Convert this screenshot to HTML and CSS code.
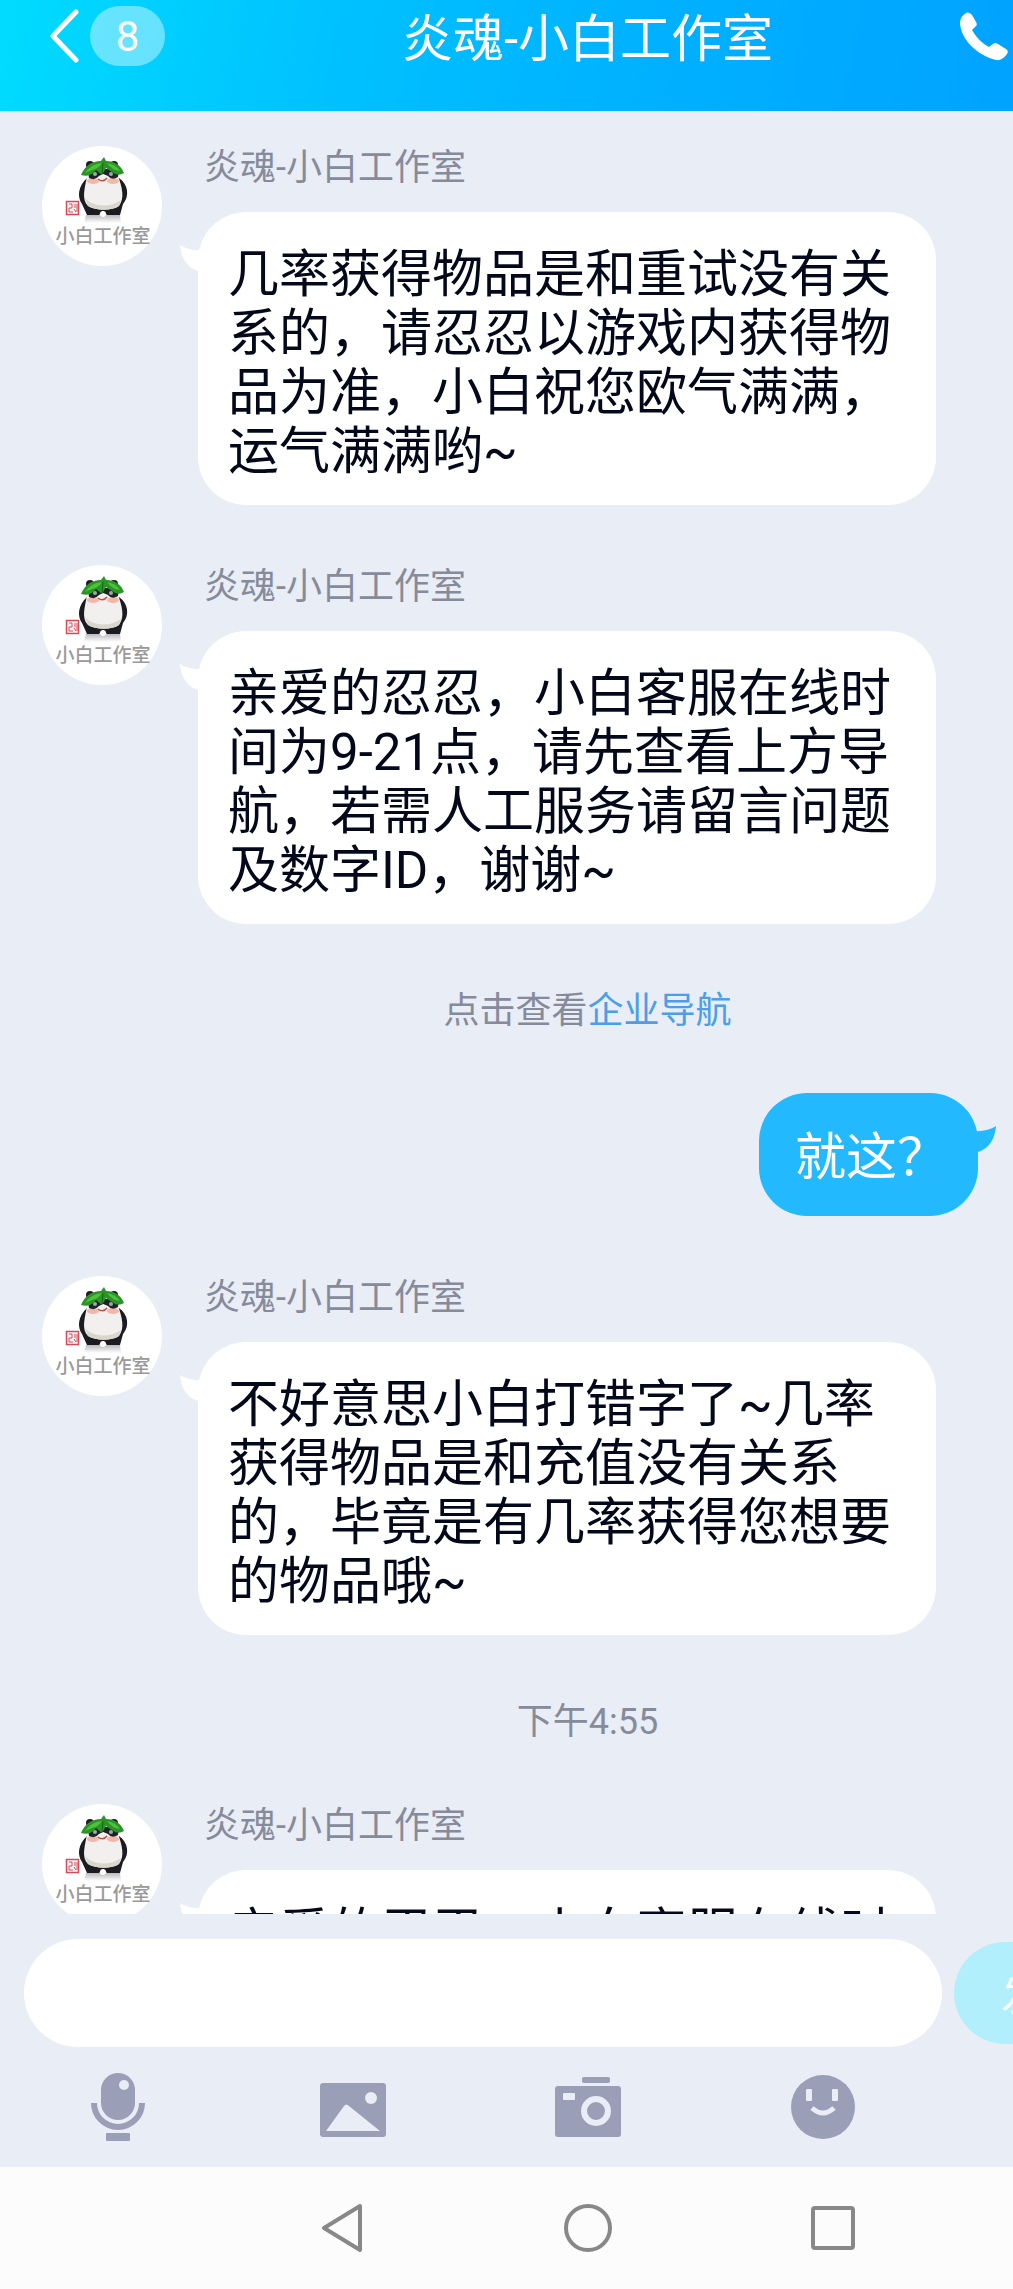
FILE: index.html
```html
<!DOCTYPE html>
<html lang="zh-CN">
<head>
<meta charset="utf-8">
<meta name="viewport" content="width=device-width, initial-scale=1">
<title>炎魂-小白工作室</title>
<link rel="stylesheet" href="styles.css">
</head>
<body>
<svg class="sprite" aria-hidden="true">
  <defs>
    <linearGradient id="shade" x1="0" y1="0" x2="0" y2="1">
      <stop offset="0" stop-color="#b9b9be"/>
      <stop offset="1" stop-color="#fff"/>
    </linearGradient>
    <symbol id="panda" viewBox="0 0 120 120">
      <circle cx="60" cy="60" r="60" fill="#fff"/>
      <path d="M44 69H78L79 77H42Z" fill="url(#shade)"/>
      <circle cx="48" cy="19" r="4" fill="#1c1c22"/>
      <circle cx="72" cy="19" r="4" fill="#1c1c22"/>
      <path d="M45 32C36 40 35 51 40 58L45 69H57L61 65L65 69H78L81 58C88 50 86 38 77 32Z" fill="#1b1b22"/>
      <path d="M45 30C43 42 39 53 46 60C54 65 70 65 77 60C83 52 80 41 76 30Z" fill="#f1f0ee"/>
      <path d="M43 52C50 60 66 63 79 54L77 60C70 65 54 65 46 60Z" fill="#d9d7cc"/>
      <ellipse cx="51" cy="35" rx="6" ry="3" fill="#f4b6a6"/>
      <ellipse cx="71" cy="35" rx="6" ry="3" fill="#f4b6a6"/>
      <path d="M46 23H77L76 31Q70 35 66 30L61 28L57 30Q53 35 47 32Z" fill="#20242a"/>
      <circle cx="53" cy="28" r="2" fill="#8fb09b"/>
      <circle cx="69" cy="28" r="2" fill="#8fb09b"/>
      <path d="M56 33Q61 37 65 32" fill="none" stroke="#c84b3f" stroke-width="1.500"/>
      <path d="M39 29Q45 15 59 15L62 11L64 15Q77 15 82 27Q76 31 70 26L64 22L60 29L54 24Q48 32 39 29Z" fill="#2a9427"/>
      <path d="M43 27Q49 18 60 17Q56 23 50 24ZM65 17Q73 18 78 25Q70 24 65 17Z" fill="#4fc23a"/>
      <path d="M61 17L60 28" fill="none" stroke="#17641b" stroke-width="1"/>
      <circle cx="61" cy="68" r="3" fill="#fff"/>
      <rect x="24.500" y="55.500" width="12" height="13" fill="#fff4f4" stroke="#d84a5a" stroke-width="1.500"/>
      <path d="M27 58H30V62H27V66H31M33 58V62M35 58V66M32 63L34 66" fill="none" stroke="#d84a5a" stroke-width="1"/>
      <text x="61" y="97" class="panda-text">小白工作室</text>
    </symbol>
    <symbol id="tail-in" viewBox="0 0 24 26"><path d="M0 0Q8 6 24 5V26H18C6 22 1 12 0 0Z" fill="#fff"/></symbol>
    <symbol id="tail-out" viewBox="0 0 24 26"><path d="M24 0Q16 6 0 5V26H6C18 22 23 12 24 0Z" fill="#22b9ff"/></symbol>
  </defs>
</svg>

<div class="app">
  <header class="topbar">
    <a class="back" href="#" aria-label="返回">
      <svg width="30" height="54" viewBox="0 0 30 54"><path d="M26 3L3 27L26 51" fill="none" stroke="#fff" stroke-width="5" stroke-linecap="round" stroke-linejoin="round"/></svg>
      <span class="unread">8</span>
    </a>
    <h1 class="title">炎魂-小白工作室</h1>
    <button class="call" type="button" aria-label="通话">
      <svg width="48" height="50" viewBox="0 0 48 50"><path d="M7 0.500Q10 0 12 3L16 10Q18 13 15 15L12 18Q18 29 29 35L33 32Q35 30 38 32L46 37Q49 39 47 42Q42 49 36 48C17 43 1 28 0 11Q0 4 7 0.500Z" fill="#fff"/></svg>
    </button>
  </header>

  <main class="chat">
    <article class="message">
      <svg class="avatar" aria-hidden="true"><use href="#panda"/></svg>
      <div class="content">
        <h2 class="sender">炎魂-小白工作室</h2>
        <p class="bubble">几率获得物品是和重试没有关系的，请忍忍以游戏内获得物品为准，小白祝您欧气满满，运气满满哟~<svg class="tail"><use href="#tail-in"/></svg></p>
      </div>
    </article>

    <article class="message">
      <svg class="avatar" aria-hidden="true"><use href="#panda"/></svg>
      <div class="content">
        <h2 class="sender">炎魂-小白工作室</h2>
        <p class="bubble">亲爱的忍忍，小白客服在线时间为9-21点，请先查看上方导航，若需人工服务请留言问题及数字ID，谢谢~<svg class="tail"><use href="#tail-in"/></svg></p>
      </div>
    </article>

    <p class="notice">点击查看<a href="#">企业导航</a></p>

    <article class="message own">
      <p class="bubble">就这？<svg class="tail"><use href="#tail-out"/></svg></p>
    </article>

    <article class="message">
      <svg class="avatar" aria-hidden="true"><use href="#panda"/></svg>
      <div class="content">
        <h2 class="sender">炎魂-小白工作室</h2>
        <p class="bubble">不好意思小白打错字了~几率获得物品是和充值没有关系的，毕竟是有几率获得您想要的物品哦~<svg class="tail"><use href="#tail-in"/></svg></p>
      </div>
    </article>

    <p class="notice"><time datetime="16:55">下午4:55</time></p>

    <article class="message">
      <svg class="avatar" aria-hidden="true"><use href="#panda"/></svg>
      <div class="content">
        <h2 class="sender">炎魂-小白工作室</h2>
        <p class="bubble">亲爱的忍忍，小白客服在线时间为9-21点，请先查看上方导航，若需人工服务请留言问题及数字ID，谢谢~<svg class="tail"><use href="#tail-in"/></svg></p>
      </div>
    </article>
  </main>

  <footer class="composer">
    <form class="entry">
      <input class="field" type="text" aria-label="输入消息">
      <button class="send" type="button">发送</button>
    </form>
    <div class="tools">
      <button type="button" aria-label="语音">
        <svg width="56" height="70" viewBox="0 0 56 70"><rect x="11" y="1" width="34" height="47" rx="17" fill="#9a9fb7"/><circle cx="34" cy="13" r="5" fill="#e9edf6"/><path d="M4 31A24 24 0 0 0 52 31" fill="none" stroke="#9a9fb7" stroke-width="6"/><rect x="16" y="61" width="24" height="8" rx="1" fill="#9a9fb7"/></svg>
      </button>
      <button type="button" aria-label="图片">
        <svg width="66" height="70" viewBox="0 0 66 70"><rect y="11" width="66" height="54" rx="3" fill="#9a9fb7"/><circle cx="51" cy="26" r="6" fill="#e9edf6"/><path d="M6 59L24 34Q26 31 29 34L60 59Z" fill="#e9edf6"/></svg>
      </button>
      <button type="button" aria-label="拍照">
        <svg width="66" height="70" viewBox="0 0 66 70"><rect x="27" y="5" width="28" height="6" rx="2" fill="#9a9fb7"/><rect y="14" width="66" height="51" rx="3" fill="#9a9fb7"/><rect x="8" y="21" width="12" height="7" rx="1" fill="#e9edf6"/><circle cx="41" cy="39" r="12" fill="none" stroke="#e9edf6" stroke-width="6"/></svg>
      </button>
      <button type="button" aria-label="表情">
        <svg width="64" height="70" viewBox="0 0 64 70"><circle cx="32" cy="35" r="32" fill="#9a9fb7"/><rect x="15" y="17" width="6" height="12" rx="1" fill="#e9edf6"/><rect x="41" y="17" width="6" height="12" rx="1" fill="#e9edf6"/><path d="M21 36Q32 46 43 36" fill="none" stroke="#e9edf6" stroke-width="5"/></svg>
      </button>
    </div>
  </footer>

  <nav class="system">
    <button type="button" aria-label="后退"><svg width="44" height="48" viewBox="0 0 44 48"><path d="M39 2L3 24L39 46Z" fill="none" stroke="#888" stroke-width="4" stroke-linejoin="round"/></svg></button>
    <button type="button" aria-label="主屏幕"><svg width="48" height="48" viewBox="0 0 48 48"><circle cx="24" cy="24" r="22" fill="none" stroke="#888" stroke-width="4"/></svg></button>
    <button type="button" aria-label="最近任务"><svg width="44" height="44" viewBox="0 0 44 44"><rect x="2" y="2" width="40" height="40" rx="2" fill="none" stroke="#888" stroke-width="4"/></svg></button>
  </nav>
</div>
</body>
</html>
```
FILE: styles.css
```css
* {
  box-sizing: border-box;
  margin: 0;
  padding: 0;
}

body {
  background: #e9edf6;
  font-family: Roboto, "Noto Sans CJK SC", sans-serif;
  color: #03081a;
}

button {
  border: 0;
  background: none;
  font: inherit;
}

svg {
  display: block;
}

.sprite {
  position: absolute;
  width: 0;
  height: 0;
}

.panda-text {
  font-family: "Noto Sans CJK SC", sans-serif;
  font-size: 19px;
  font-weight: 500;
  fill: #999;
  text-anchor: middle;
}

.app {
  display: flex;
  flex-direction: column;
  height: 100vh;
  overflow: hidden;
}

/* Top bar */
.topbar {
  display: flex;
  flex: none;
  align-items: flex-start;
  height: 111px;
  padding: 6px 5px 0 50px;
  background: linear-gradient(100deg, #00dcff 0%, #00c2ff 32%, #00b2ff 62%, #00a3ff 100%);
  color: #fff;
}

.back {
  display: flex;
  align-items: center;
  gap: 10px;
  color: inherit;
  text-decoration: none;
}

.unread {
  width: 75px;
  height: 60px;
  border-radius: 30px;
  background: rgba(255, 255, 255, 0.4);
  font-size: 42px;
  line-height: 62px;
  text-align: center;
}

.title {
  flex: 1;
  margin-left: 50px;
  font-size: 51px;
  font-weight: 400;
  line-height: 68px;
  text-align: center;
}

.call {
  margin-top: 6px;
}

/* Conversation */
.chat {
  display: flex;
  flex: 1;
  flex-direction: column;
  gap: 60px;
  min-height: 0;
  padding: 35px 35px 0 42px;
  overflow: hidden;
}

.message {
  display: flex;
  flex: none;
  gap: 36px;
  padding-right: 42px;
}

.avatar {
  flex: none;
  width: 120px;
  height: 120px;
}

.content {
  flex: 1;
}

.sender {
  height: 66px;
  padding-left: 6px;
  color: #868b9b;
  font-size: 36px;
  font-weight: 400;
  line-height: 44px;
}

.bubble {
  position: relative;
  padding: 33px 32px 24px 30px;
  border-radius: 48px;
  background: #fff;
  font-size: 51px;
  line-height: 59px;
}

.tail {
  position: absolute;
  top: 33px;
  left: -18px;
  width: 24px;
  height: 26px;
}

.own {
  justify-content: flex-end;
  padding-right: 0;
}

.own .bubble {
  padding: 35px 30px 29px 36px;
  background: #22b9ff;
  color: #fff;
}

.own .tail {
  right: -18px;
  left: auto;
}

.notice {
  flex: none;
  padding: 5px 0 0 120px;
  margin-right: -35px;
  color: #868b9b;
  font-size: 36px;
  line-height: 44px;
  text-align: center;
}

.notice a {
  color: #4a9fe8;
  text-decoration: none;
}

/* Composer */
.composer {
  flex: none;
}

.entry {
  display: flex;
  align-items: center;
  gap: 12px;
  padding: 25px 0 0 24px;
}

.field {
  flex: 1;
  min-width: 0;
  height: 108px;
  padding: 0 40px;
  border: 0;
  border-radius: 54px;
  background: #fff;
  font: inherit;
  font-size: 51px;
}

.send {
  flex: none;
  width: 174px;
  height: 102px;
  margin-right: -115px;
  border-radius: 51px;
  background: #b2effd;
  color: #fff;
  font-size: 40px;
}

.tools {
  display: grid;
  grid-template-columns: repeat(4, 1fr);
  place-items: center;
  height: 120px;
  padding-right: 73px;
}

/* System navigation */
.system {
  display: grid;
  flex: none;
  grid-template-columns: repeat(3, 1fr);
  place-items: center;
  height: 122px;
  padding: 0 58px 0 220px;
  background: #fcfcfd;
}
```
